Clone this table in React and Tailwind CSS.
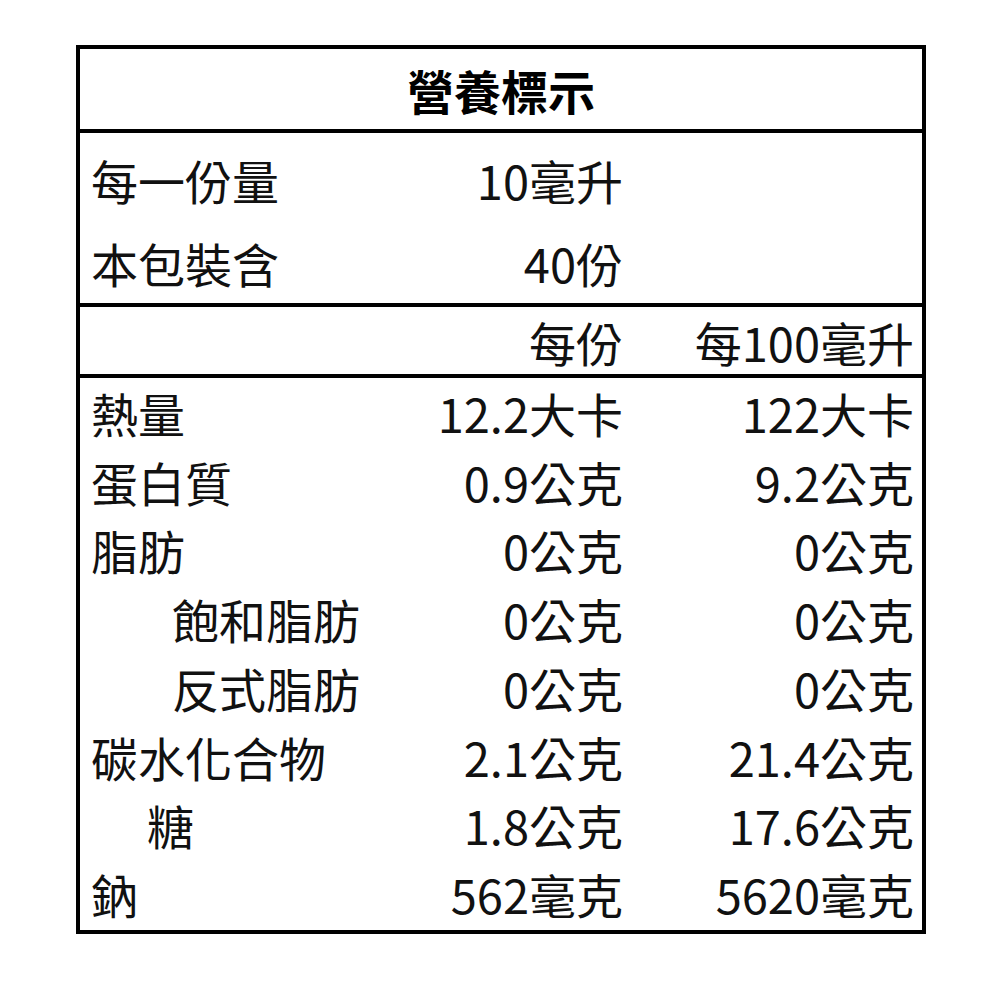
import React from "react";

const font = { fontFamily: '"Noto Sans CJK TC", "Noto Sans CJK SC", sans-serif' };

function Row({ label, a, b, indent = "pl-[11px]", h = "h-[68.75px]" }) {
  return (
    <div className={`flex items-center ${h} pr-[8px]`}>
      <div className={`flex-1 ${indent} whitespace-nowrap`}>{label}</div>
      <div className="w-[250px] text-right whitespace-nowrap">{a}</div>
      <div className="w-[291px] text-right whitespace-nowrap">{b}</div>
    </div>
  );
}

export default function App() {
  const data = [
    { label: "熱量", a: "12.2大卡", b: "122大卡" },
    { label: "蛋白質", a: "0.9公克", b: "9.2公克" },
    { label: "脂肪", a: "0公克", b: "0公克" },
    { label: "飽和脂肪", a: "0公克", b: "0公克", indent: "pl-[92px]" },
    { label: "反式脂肪", a: "0公克", b: "0公克", indent: "pl-[92px]" },
    { label: "碳水化合物", a: "2.1公克", b: "21.4公克" },
    { label: "糖", a: "1.8公克", b: "17.6公克", indent: "pl-[67px]" },
    { label: "鈉", a: "562毫克", b: "5620毫克" },
  ];
  return (
    <div className="w-[1000px] h-[1000px] bg-white pt-[45px] pl-[76px]" style={font}>
      <div className="w-[850px] border-4 border-black text-[47px] leading-none text-[#111]">
        <div className="h-[84px] flex items-center justify-center font-bold border-b-4 border-black text-black">
          營養標示
        </div>
        <div className="h-[174px] border-b-4 border-black flex flex-col pt-[4px]">
          <Row label="每一份量" a="10毫升" b="" h="h-[85px]" />
          <Row label="本包裝含" a="40份" b="" h="h-[81px]" />
        </div>
        <div className="h-[71px] border-b-4 border-black flex flex-col pt-[2px]">
          <Row label="" a="每份" b="每100毫升" h="h-[65px]" />
        </div>
        <div className="h-[552px] flex flex-col">
          {data.map((d) => (
            <Row key={d.label} {...d} />
          ))}
        </div>
      </div>
    </div>
  );
}
